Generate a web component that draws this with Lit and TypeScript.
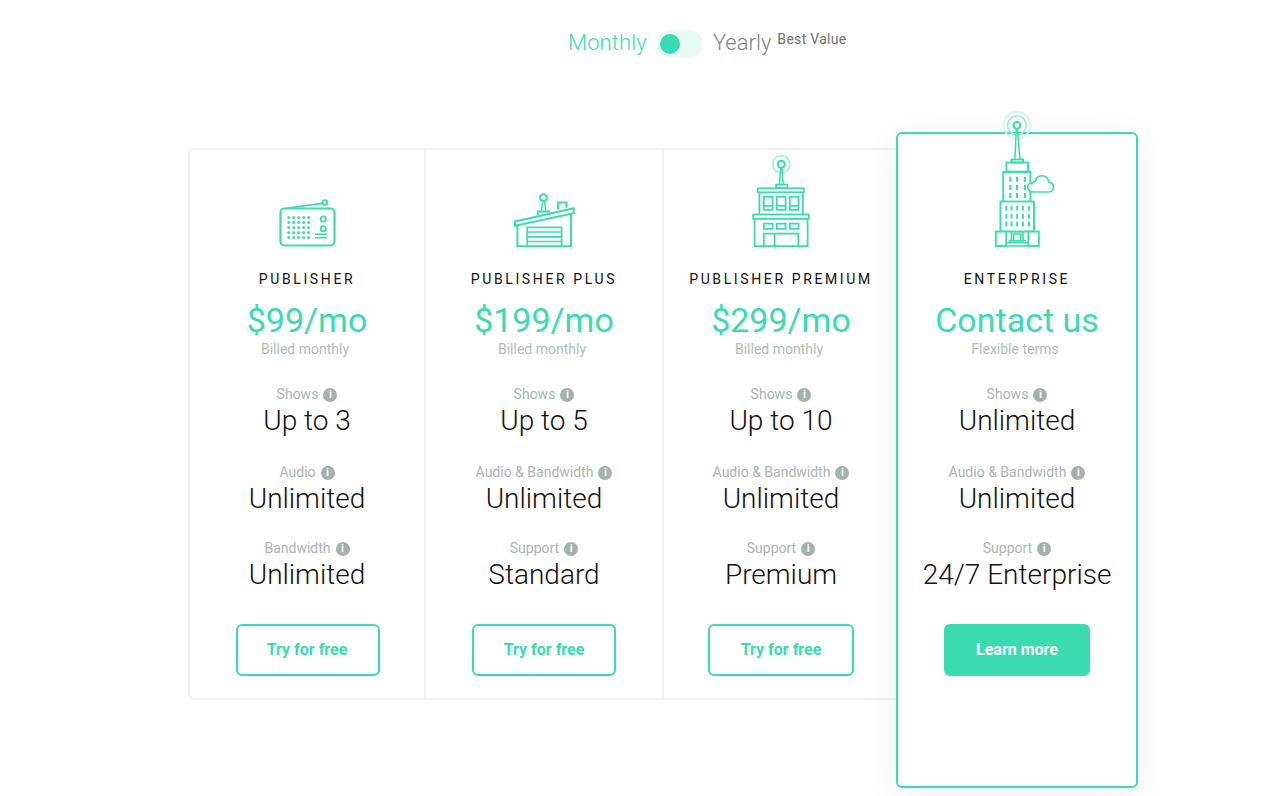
import { LitElement, html, css, svg } from "lit";
import { customElement } from "lit/decorators.js";

const range = (n: number) => Array.from({ length: n }, (_, i) => i);

const radio = html`<svg class="ico" width="60" height="50" viewBox="277 199 60 50">
  <g fill="none" stroke="currentColor" stroke-width="2.2">
    <rect x="280.5" y="209.5" width="54" height="37" rx="4"/>
    <path d="M287 209.2 322.5 204.3" stroke-width="1.7"/>
    <circle cx="324.8" cy="203.5" r="2.4" stroke-width="1.9"/>
    <circle cx="323.3" cy="220" r="2.6" stroke-width="1.9"/>
    <circle cx="323.3" cy="229.7" r="2.6" stroke-width="1.9"/>
    <path d="M315 235.3h12M315 238.8h12" stroke-width="1.5"/>
  </g>
  <g fill="currentColor">
    ${range(5).map((r) => range(5).map((c) => svg`<circle cx="${288.7 + c * 5}" cy="${218.4 + r * 5}" r="1.5"/>`))}
  </g>
</svg>`;

const garage = html`<svg class="ico" width="64" height="56" viewBox="512 193 64 56">
  <g fill="none" stroke="currentColor" stroke-width="2">
    <path d="M515 222.5 573.7 209.3v5L515 226.8Z" />
    <path d="M517.4 226.5V247.2H571V214"/>
    <path d="M527.2 247V228.4H561.6V247M527.2 233H561.6M527.2 237.8H561.6M527.2 242.5H561.6" stroke-width="1.7"/>
    <circle cx="543.5" cy="198.6" r="3.4"/>
    <path d="M542.6 202 541.4 212.5M544.6 202 545.8 212.5" stroke-width="1.5"/>
    <path d="M537.8 216V212.4H549.2V213.5" />
    <path d="M558 210.5V203.6H566.6V208.7"/>
  </g>
</svg>`;

const premium = html`<svg class="ico" width="60" height="94" viewBox="751 155 60 94">
  <circle cx="781.3" cy="165.3" r="8.6" fill="none" stroke="#a8eed9" stroke-width="1.8"/>
  <g fill="none" stroke="currentColor" stroke-width="1.8">
    <circle cx="781.3" cy="165.3" r="3.5" stroke-width="2"/>
    <path d="M780.6 169 779.5 185.3M782 169 783.1 185.3" stroke-width="1.5"/>
    <rect x="776.2" y="185.6" width="11" height="3.4"/>
    <rect x="757.8" y="189.3" width="46" height="4"/>
    <path d="M759.4 193.3V215M802.8 193.3V215"/>
    ${[763.8, 776.8, 789.8].map((x) => svg`<rect x="${x}" y="197.8" width="8.8" height="13"/><path d="M${x} 206.8h8.8"/>`)}
    <rect x="753.2" y="215.5" width="55.6" height="4.4"/>
    <path d="M754.6 220V247.2H807.6V220"/>
    ${[763.8, 776.8, 789.8].map((x) => svg`<rect x="${x}" y="224.6" width="8.8" height="5.2"/>`)}
    <path d="M763.8 247V234.6H798.4V247M774.6 234.6V247"/>
  </g>
</svg>`;

const enterprise = html`<svg class="ico ent" width="80" height="138" viewBox="977 111 80 138">
  <circle cx="1016.9" cy="126.3" r="13.4" fill="none" stroke="#d3f6ec" stroke-width="1.8"/>
  <circle cx="1016.9" cy="126.3" r="9.4" fill="none" stroke="#a4ecd7" stroke-width="1.8"/>
  <g fill="none" stroke="currentColor" stroke-width="1.9">
    <circle cx="1016.9" cy="126.3" r="3.4" stroke-width="2"/>
    <path d="M1016.3 130 1014.9 160.5M1017.5 130 1019.9 160.5" stroke-width="1.5"/>
    <rect x="1011.5" y="160.5" width="11.5" height="3"/>
    <rect x="1006.4" y="163.6" width="21.6" height="9"/>
    <path d="M1003.2 202.3V173H1030.4V202.3"/>
    <rect x="1000.4" y="202.5" width="33.6" height="30"/>
    <path d="M1011.4 241.8V232.8H1023V241.8ZM1013.6 241.8V235H1020.8V241.8" stroke-width="1.6"/>
    <rect x="995.8" y="232.6" width="10.4" height="14.4" fill="#fff"/>
    <rect x="1028.4" y="232.6" width="10.4" height="14.4" fill="#fff"/>
    <path d="M1006.2 243.8H1028.4M1006.2 247H1028.4M1008.5 241.8H1026" stroke-width="1.5"/>
    <path d="M1033.4 193H1048.6C1055 193 1055 183.4 1048.8 183C1047.4 175 1037 174.6 1035.5 182.4C1033.6 182.4 1032.5 183.4 1031.6 184.6C1029 184 1027.4 186.3 1027.8 188.6C1028.2 191.4 1030.6 193 1033.4 193Z" fill="#fff" stroke-width="1.7"/>
  </g>
  <g fill="currentColor">
    ${[1009.3, 1016, 1024].map((x) => [177.8, 186, 194].map((y) => svg`<rect x="${x}" y="${y}" width="2.1" height="5"/>`))}
    ${[1005.3, 1010.6, 1016.2, 1022, 1028].map((x) => [206.8, 215, 222.6].map((y) => svg`<rect x="${x}" y="${y}" width="1.9" height="4.8"/>`))}
  </g>
</svg>`;

interface Spec { label: string; value: string }
interface Plan { name: string; price: string; note: string; specs: Spec[]; cta: string; icon: unknown; wide?: boolean }

const plans: Plan[] = [
  { name: "PUBLISHER", price: "$99/mo", note: "Billed monthly", icon: radio, cta: "Try for free",
    specs: [{ label: "Shows", value: "Up to 3" }, { label: "Audio", value: "Unlimited" }, { label: "Bandwidth", value: "Unlimited" }] },
  { name: "PUBLISHER PLUS", price: "$199/mo", note: "Billed monthly", icon: garage, cta: "Try for free",
    specs: [{ label: "Shows", value: "Up to 5" }, { label: "Audio & Bandwidth", value: "Unlimited" }, { label: "Support", value: "Standard" }] },
  { name: "PUBLISHER PREMIUM", price: "$299/mo", note: "Billed monthly", icon: premium, cta: "Try for free", wide: true,
    specs: [{ label: "Shows", value: "Up to 10" }, { label: "Audio & Bandwidth", value: "Unlimited" }, { label: "Support", value: "Premium" }] },
];
const ent: Plan = { name: "ENTERPRISE", price: "Contact us", note: "Flexible terms", icon: enterprise, cta: "Learn more",
  specs: [{ label: "Shows", value: "Unlimited" }, { label: "Audio & Bandwidth", value: "Unlimited" }, { label: "Support", value: "24/7 Enterprise" }] };

@customElement("app-root")
export class AppRoot extends LitElement {
  static styles = css`
    :host { display: block; width: 1288px; height: 796px; overflow: hidden; background: #fff; font-family: Roboto, "Liberation Sans", sans-serif; color: #111; }
    .toggle-row { display: flex; align-items: center; height: 28px; padding: 30px 0 0 568px; }
    .m { font-size: 22px; font-weight: 300; color: #3bdbb0; line-height: 28px; margin-top: -2px; letter-spacing: 0.12px; }
    .y { font-size: 22px; font-weight: 300; color: #808685; line-height: 28px; margin-left: 10px; margin-top: -2px; }
    .track { width: 46px; height: 28px; border-radius: 14px; background: #e8faf5; margin-left: 10px; display: flex; align-items: center; padding-left: 3px; box-sizing: border-box; }
    .knob { width: 20px; height: 20px; border-radius: 50%; background: #3bdbb0; }
    .best { font-size: 14px; color: #6f6f6f; line-height: 18px; margin: -11px 0 0 6px; letter-spacing: 0.3px; }
    .plans { display: flex; align-items: flex-start; padding: 74px 0 0 188px; }
    .table { display: grid; grid-template-columns: 236px 238px 234px; border: 2px solid #eef3f2; border-radius: 6px; margin-top: 16px; }
    .col { display: flex; flex-direction: column; align-items: center; border-right: 2px solid #eef3f2; padding-bottom: 22px; }
    .col:last-child { border-right: none; }
    .card { position: relative; z-index: 1; width: 242px; height: 656px; box-sizing: border-box; border: 2px solid #3bdbb0; border-radius: 6px; background: #fff; margin-left: -4px; box-shadow: 0 6px 34px rgba(30, 60, 50, 0.07); display: flex; flex-direction: column; align-items: center; }
    .icon-box { height: 98px; display: flex; align-items: flex-end; justify-content: center; color: #3bdbb0; width: 100%; }
    .card .icon-box { height: 114px; }
    .ico { display: block; flex: none; overflow: visible; }
    .name { font-size: 14px; letter-spacing: 2.62px; line-height: 20px; margin-top: 21px; color: #111; white-space: nowrap; }
    .price { font-size: 34px; font-weight: 400; line-height: 40px; margin-top: 11px; color: #3bdbb0; white-space: nowrap; }
    .note { font-size: 14px; font-weight: 400; line-height: 18px; color: #b2bcb8; padding-right: 4px; }
    .spec { display: flex; flex-direction: column; align-items: center; }
    .spec.s0 { margin-top: 27px; }
    .spec.s1 { margin-top: 24px; }
    .spec.s2 { margin-top: 22px; }
    .label { display: flex; align-items: center; gap: 5px; font-size: 14px; line-height: 18px; color: #aab5b1; white-space: nowrap; }
    .i { width: 14px; height: 14px; border-radius: 50%; background: #a5b1ab; color: #fff; font-size: 11px; font-weight: 700; line-height: 14px; text-align: center; margin-top: 2px; flex: none; }
    .value { font-size: 28px; font-weight: 300; line-height: 36px; color: #111; white-space: nowrap; }
    .btn { box-sizing: border-box; height: 52px; width: 144px; margin-top: 31px; padding-bottom: 2px; border: 2px solid #3bdbb0; border-radius: 6px; color: #3bdbb0; font-size: 16px; font-weight: 700; display: flex; align-items: center; justify-content: center; background: #fff; }
    .col:first-child .btn { margin-left: 2px; padding-right: 2px; }
    .btn.wide { width: 146px; }
    .btn.solid { background: #3bdbb0; color: #fff; }
  `;

  private plan(p: Plan, solid = false) {
    return html`
      <div class="icon-box">${p.icon}</div>
      <div class="name">${p.name}</div>
      <div class="price">${p.price}</div>
      <div class="note">${p.note}</div>
      ${p.specs.map((s, i) => html`
        <div class="spec s${i}">
          <div class="label">${s.label}<span class="i">i</span></div>
          <div class="value">${s.value}</div>
        </div>`)}
      <div class="btn ${p.wide || solid ? "wide" : ""} ${solid ? "solid" : ""}">${p.cta}</div>
    `;
  }

  render() {
    return html`
      <div class="toggle-row">
        <span class="m">Monthly</span>
        <div class="track"><div class="knob"></div></div>
        <span class="y">Yearly</span>
        <span class="best">Best Value</span>
      </div>
      <div class="plans">
        <div class="table">
          ${plans.map((p) => html`<div class="col">${this.plan(p)}</div>`)}
        </div>
        <div class="card">${this.plan(ent, true)}</div>
      </div>
    `;
  }
}
